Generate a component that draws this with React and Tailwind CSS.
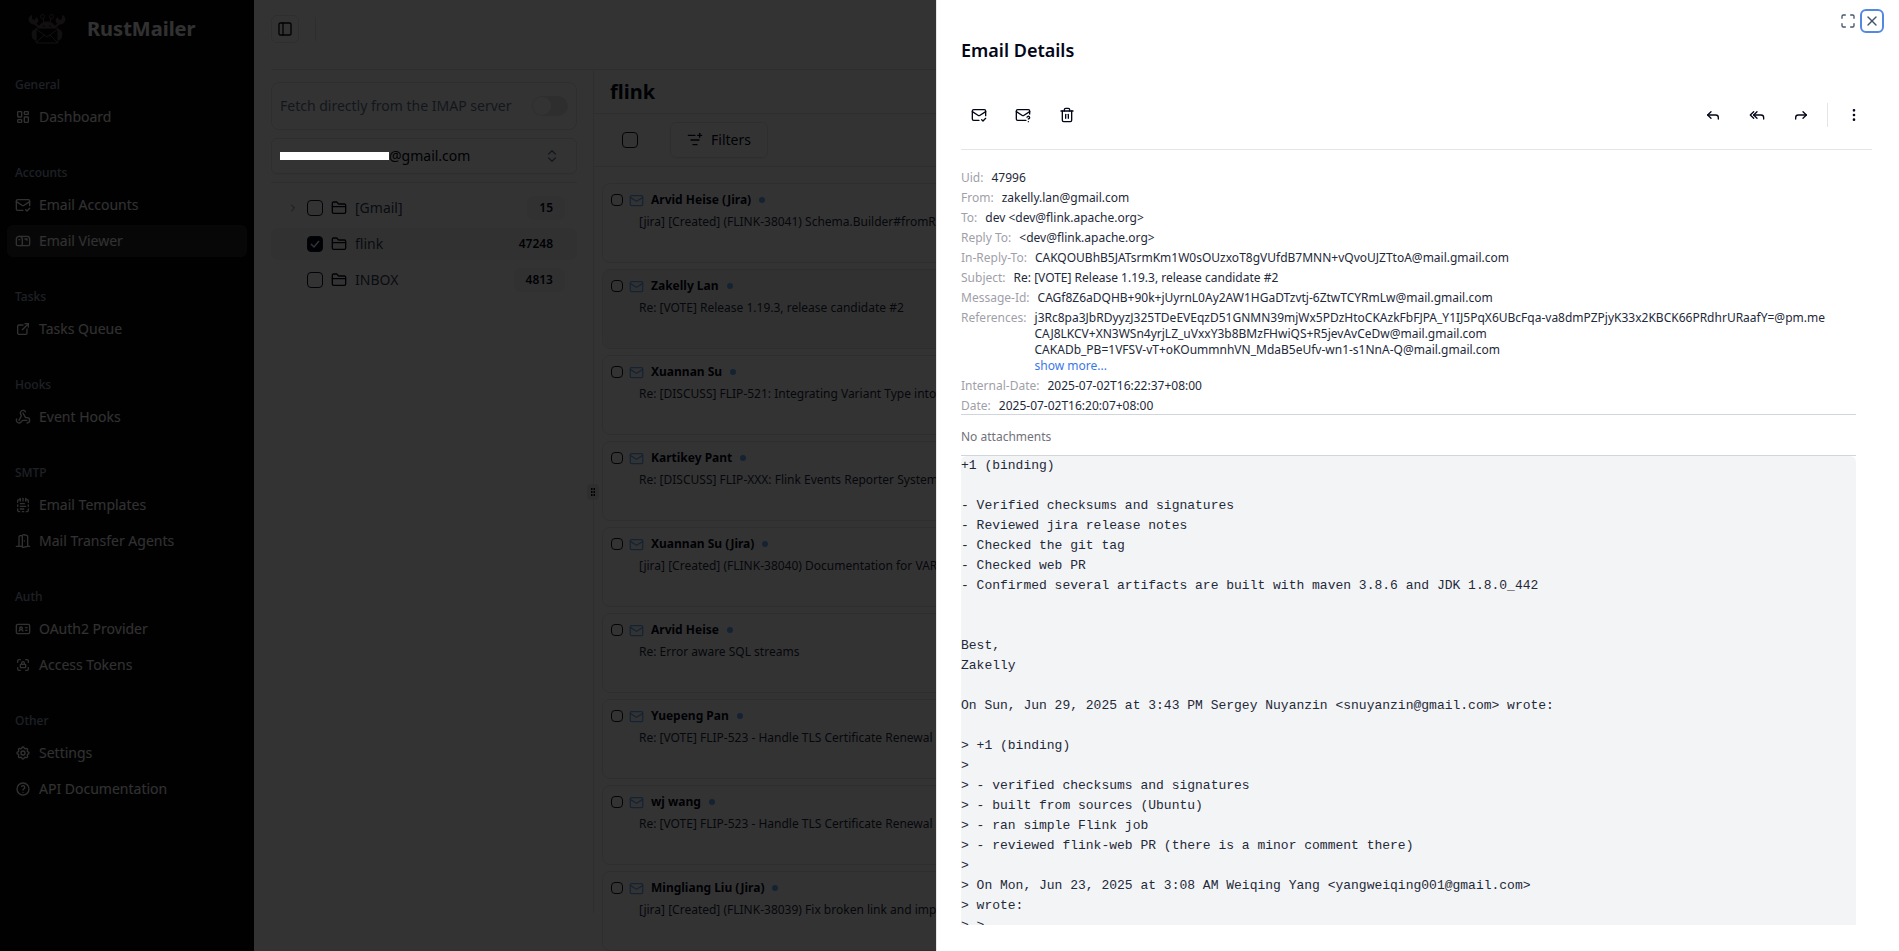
import { useState } from 'react';
import { TbLayoutDashboard, TbExternalLink, TbLockAccess, TbSettings, TbHelp } from 'react-icons/tb';
import {
  ChevronRight,
  ChevronsUpDown,
  DoorOpen,
  EllipsisVertical,
  FolderClosed,
  Forward,
  IdCard,
  ListFilterPlus,
  Mail,
  Mailbox,
  MailCheck,
  MailQuestion,
  Maximize,
  NotepadTextDashed,
  PanelLeft,
  Reply,
  ReplyAll,
  Trash2,
  Webhook,
  X,
} from 'lucide-react';
import clsx from 'clsx';

const navGroups = [
  { title: 'General', items: [{ label: 'Dashboard', icon: TbLayoutDashboard }] },
  {
    title: 'Accounts',
    items: [
      { label: 'Email Accounts', icon: MailCheck },
      { label: 'Email Viewer', icon: Mailbox, active: true },
    ],
  },
  { title: 'Tasks', items: [{ label: 'Tasks Queue', icon: TbExternalLink }] },
  { title: 'Hooks', items: [{ label: 'Event Hooks', icon: Webhook }] },
  {
    title: 'SMTP',
    items: [
      { label: 'Email Templates', icon: NotepadTextDashed },
      { label: 'Mail Transfer Agents', icon: DoorOpen },
    ],
  },
  {
    title: 'Auth',
    items: [
      { label: 'OAuth2 Provider', icon: IdCard },
      { label: 'Access Tokens', icon: TbLockAccess },
    ],
  },
  {
    title: 'Other',
    items: [
      { label: 'Settings', icon: TbSettings },
      { label: 'API Documentation', icon: TbHelp },
    ],
  },
];

const mailboxes = [
  { name: '[Gmail]', count: 15, expandable: true },
  { name: 'flink', count: 47248 },
  { name: 'INBOX', count: 4813 },
];

const messages = [
  { from: 'Arvid Heise (Jira)', subject: '[jira] [Created] (FLINK-38041) Schema.Builder#fromResolvedSchema drops columns' },
  { from: 'Zakelly Lan', subject: 'Re: [VOTE] Release 1.19.3, release candidate #2', open: true },
  { from: 'Xuannan Su', subject: 'Re: [DISCUSS] FLIP-521: Integrating Variant Type into Flink' },
  { from: 'Kartikey Pant', subject: 'Re: [DISCUSS] FLIP-XXX: Flink Events Reporter System' },
  { from: 'Xuannan Su (Jira)', subject: '[jira] [Created] (FLINK-38040) Documentation for VARIANT type' },
  { from: 'Arvid Heise', subject: 'Re: Error aware SQL streams' },
  { from: 'Yuepeng Pan', subject: 'Re: [VOTE] FLIP-523 - Handle TLS Certificate Renewal' },
  { from: 'wj wang', subject: 'Re: [VOTE] FLIP-523 - Handle TLS Certificate Renewal' },
  { from: 'Mingliang Liu (Jira)', subject: '[jira] [Created] (FLINK-38039) Fix broken link and improve docs' },
];

const headers = [
  ['Uid', '47996'],
  ['From', 'zakelly.lan@gmail.com'],
  ['To', 'dev <dev@flink.apache.org>'],
  ['Reply To', '<dev@flink.apache.org>'],
  ['In-Reply-To', 'CAKQOUBhB5JATsrmKm1W0sOUzxoT8gVUfdB7MNN+vQvoUJZTtoA@mail.gmail.com'],
  ['Subject', 'Re: [VOTE] Release 1.19.3, release candidate #2'],
  ['Message-Id', 'CAGf8Z6aDQHB+90k+jUyrnL0Ay2AW1HGaDTzvtj-6ZtwTCYRmLw@mail.gmail.com'],
  [
    'References',
    [
      'j3Rc8pa3JbRDyyzJ325TDeEVEqzD51GNMN39mjWx5PDzHtoCKAzkFbFJPA_Y1IJ5PqX6UBcFqa-va8dmPZPjyK33x2KBCK66PRdhrURaafY=@pm.me',
      'CAJ8LKCV+XN3WSn4yrjLZ_uVxxY3b8BMzFHwiQS+R5jevAvCeDw@mail.gmail.com',
      'CAKADb_PB=1VFSV-vT+oKOummnhVN_MdaB5eUfv-wn1-s1NnA-Q@mail.gmail.com',
    ],
  ],
  ['Internal-Date', '2025-07-02T16:22:37+08:00'],
  ['Date', '2025-07-02T16:20:07+08:00'],
];

const body = `+1 (binding)

- Verified checksums and signatures
- Reviewed jira release notes
- Checked the git tag
- Checked web PR
- Confirmed several artifacts are built with maven 3.8.6 and JDK 1.8.0_442


Best,
Zakelly

On Sun, Jun 29, 2025 at 3:43 PM Sergey Nuyanzin <snuyanzin@gmail.com> wrote:

> +1 (binding)
>
> - verified checksums and signatures
> - built from sources (Ubuntu)
> - ran simple Flink job
> - reviewed flink-web PR (there is a minor comment there)
>
> On Mon, Jun 23, 2025 at 3:08 AM Weiqing Yang <yangweiqing001@gmail.com>
> wrote:
> >
`;

const CrabLogo = () => (
  <svg viewBox="0 0 40 32" className="h-8 w-10" fill="none" stroke="#5c4d58" strokeWidth="1" aria-hidden="true">
    <path d="M11 17c1-5 4-8 9-8s8 3 9 8z" fill="#5c4d58" />
    <path d="M16 13h2M22 13h2" stroke="#09090b" />
    <circle cx="15.500" cy="3.500" r="2" />
    <circle cx="24.500" cy="3.500" r="2" />
    <path d="M16 5.500l1 4M24 5.500l-1 4" />
    <path d="M5 2C2 3 1 6 2 8c1 3 4 4 7 3 2-1 3-3 2-5L9 4l-1 3-3-1zM35 2c3 1 4 4 3 6-1 3-4 4-7 3-2-1-3-3-2-5l2-2 1 3 3-1z" fill="#5c4d58" stroke="none" />
    <path d="M7 10l5 4M33 10l-5 4" strokeWidth="2" />
    <path d="M9 16c-4 1-5 4-4 7 0 2 1 4 4 4zM31 16c4 1 5 4 4 7 0 2-1 4-4 4z" fill="#5c4d58" stroke="none" />
    <rect x="9" y="15" width="22" height="15" rx="1" fill="#09090b" />
    <path d="M9 16l11 8 11-8M9 30l8-8M31 30l-8-8" />
  </svg>
);

const Checkbox = ({ small, ...props }) => (
  <span className={clsx('relative flex shrink-0', small ? 'size-3' : 'size-4')}>
    <input
      type="checkbox"
      className="peer size-full appearance-none rounded-sm border border-slate-900 checked:bg-slate-950"
      {...props}
    />
    <svg viewBox="0 0 16 16" className="pointer-events-none absolute inset-0 hidden peer-checked:block" fill="none" stroke="white" strokeWidth="1.500">
      <path d="M4 8l3 3 5-6" />
    </svg>
  </span>
);

const IconButton = ({ label, icon: Icon }) => (
  <button type="button" aria-label={label} className="flex size-9 items-center justify-center rounded-md hover:bg-slate-100">
    <Icon size={16} />
  </button>
);

const Sidebar = () => (
  <aside className="flex w-[254px] shrink-0 flex-col bg-[#09090b] text-zinc-100">
    <div className="flex h-[57px] items-center gap-5 pl-[27px]">
      <CrabLogo />
      <span className="text-xl font-bold">RustMailer</span>
    </div>
    <nav className="flex flex-col gap-6 px-[7px] pt-3">
      {navGroups.map((group) => (
        <div key={group.title}>
          <h2 className="flex h-8 items-center px-2 text-xs font-medium text-slate-400">{group.title}</h2>
          <ul className="flex flex-col gap-1">
            {group.items.map(({ label, icon: Icon, active }) => (
              <li key={label}>
                <a href="#" className={clsx('flex h-8 items-center gap-2 rounded-md px-2 text-sm', active && 'bg-zinc-800')}>
                  <Icon size={16} className="shrink-0" />
                  {label}
                </a>
              </li>
            ))}
          </ul>
        </div>
      ))}
    </nav>
  </aside>
);

const MailboxPanel = () => (
  <section className="flex w-[322px] shrink-0 flex-col pt-3 pr-4">
    <label className="flex h-12 items-center justify-between rounded-lg border border-neutral-200 px-2 text-sm text-slate-500">
      Fetch directly from the IMAP server
      <span className="relative flex h-5 w-9">
        <input type="checkbox" role="switch" className="peer size-full appearance-none rounded-full bg-neutral-200" />
        <span className="pointer-events-none absolute top-px left-px size-[18px] rounded-full bg-white" />
      </span>
    </label>
    <button type="button" className="mt-2 flex h-9 items-center rounded-md border border-neutral-200 px-2 text-sm shadow-xs">
      <span className="relative z-20 h-2 w-[109px] bg-white" />
      @gmail.com
      <ChevronsUpDown size={16} className="mr-2 ml-auto text-slate-500" />
    </button>
    <hr className="mt-2 border-neutral-200" />
    <ul className="flex flex-col gap-1 pt-[9px]">
      {mailboxes.map((box) => (
        <li key={box.name} className={clsx('flex h-8 items-center gap-2 rounded-md pr-3 pl-4', box.name === 'flink' && 'bg-neutral-100')}>
          {box.expandable ? <ChevronRight size={12} className="text-slate-500" /> : <span className="w-3" />}
          <label className="flex flex-1 items-center gap-2 text-sm text-slate-700">
            <Checkbox defaultChecked={box.name === 'flink'} />
            <FolderClosed size={16} className="text-slate-950" />
            {box.name}
          </label>
          <span className="rounded-md bg-neutral-100 px-3 py-1 text-xs font-semibold">{box.count}</span>
        </li>
      ))}
    </ul>
  </section>
);

const MessageList = () => (
  <section className="flex min-w-0 flex-1 flex-col">
    <h1 className="flex h-11 items-center px-4 text-xl font-bold">flink</h1>
    <div className="flex h-[55px] items-center gap-8 border-y border-neutral-200 px-7">
      <Checkbox aria-label="Select all" />
      <button type="button" className="flex h-9 items-center gap-2 rounded-md border border-neutral-200 px-4 text-sm shadow-xs">
        <ListFilterPlus size={16} />
        Filters
      </button>
    </div>
    <ul className="flex flex-col gap-1.5 px-2 pt-4">
      {messages.map((msg) => (
        <li key={msg.from} className={clsx('h-20 shrink-0 rounded-lg border border-neutral-200 px-2 py-1.5', msg.open && 'bg-neutral-100')}>
          <label className="flex h-5 items-center text-xs font-bold">
            <Checkbox small />
            <Mail size={15} className="mr-[7px] ml-1.5 text-[#66aaf8]" />
            {msg.from}
            <span className="ml-2 size-1.5 rounded-full bg-[#66aaf8]" />
          </label>
          <p className="truncate pt-1 pl-7 text-xs text-slate-800">{msg.subject}</p>
        </li>
      ))}
    </ul>
  </section>
);

const EmailDrawer = () => {
  const [expanded, setExpanded] = useState(false);

  return (
    <div
      role="dialog"
      aria-label="Email Details"
      className="fixed inset-y-0 right-0 z-30 flex w-[963px] max-w-full flex-col border-l border-neutral-200 bg-white pr-[27px] pb-[26px] pl-6"
    >
      <div className="absolute top-[9px] right-[15px] flex items-center gap-0.5 text-slate-600">
        <button type="button" aria-label="Fullscreen" className="flex size-5 items-center justify-center">
          <Maximize size={16} />
        </button>
        <button type="button" aria-label="Close" className="flex size-6 items-center justify-center rounded-md border-2 border-[#5588e0]">
          <X size={16} />
        </button>
      </div>
      <h2 className="mt-9 text-lg font-semibold">Email Details</h2>
      <div className="mt-[33px] flex items-center gap-2 border-b border-neutral-200 pb-4">
        <IconButton label="Mark as read" icon={MailCheck} />
        <IconButton label="Mark as unread" icon={MailQuestion} />
        <IconButton label="Delete" icon={Trash2} />
        <div className="ml-auto" />
        <IconButton label="Reply" icon={Reply} />
        <IconButton label="Reply all" icon={ReplyAll} />
        <IconButton label="Forward" icon={Forward} />
        <div className="h-6 w-px bg-neutral-200" />
        <IconButton label="More" icon={EllipsisVertical} />
      </div>
      <div className="mr-4 flex min-h-0 flex-1 flex-col pt-5 text-xs">
        <dl className="flex flex-col gap-1 border-b border-gray-300">
          {headers.map(([name, value]) => (
            <div key={name} className="flex gap-2">
              <dt className="shrink-0 text-zinc-400">{name}:</dt>
              {Array.isArray(value) ? (
                <dd className="text-gray-800">
                  {value.map((ref) => (
                    <div key={ref}>{ref}</div>
                  ))}
                  <button type="button" className="block text-[#3b78e7]" onClick={() => setExpanded(!expanded)}>
                    {expanded ? 'show less' : 'show more...'}
                  </button>
                </dd>
              ) : (
                <dd className="text-gray-800">{value}</dd>
              )}
            </div>
          ))}
        </dl>
        <p className="border-b border-gray-300 pt-3.5 pb-2.5 text-zinc-500">No attachments</p>
        <pre className="min-h-0 flex-1 overflow-hidden rounded-t-md bg-gray-100 font-['Liberation_Mono',monospace] text-[13px] leading-5 text-gray-800">
          {body}
        </pre>
      </div>
    </div>
  );
};

const App = () => (
  <div className="flex h-screen overflow-hidden bg-white font-['Noto_Sans',sans-serif] text-slate-950">
    <Sidebar />
    <main className="flex min-w-0 flex-1 flex-col pl-[17px]">
      <header className="flex h-[70px] shrink-0 items-start gap-4 border-b border-neutral-200 pt-[15px]">
        <button type="button" aria-label="Toggle sidebar" className="flex size-7 items-center justify-center rounded-md border border-neutral-200">
          <PanelLeft size={16} />
        </button>
        <div className="mt-0.5 h-6 w-px bg-neutral-200" />
      </header>
      <div className="flex min-h-0 flex-1">
        <MailboxPanel />
        <div className="relative mb-[38px] w-px shrink-0 bg-neutral-200">
          <div className="absolute top-1/2 -left-1.5 flex h-4 w-3 -translate-y-1/2 items-center justify-center rounded-sm bg-neutral-200">
            <svg viewBox="0 0 4 8" className="h-2 w-1" fill="#020617">
              <path d="M0 0h1.500v2H0zM2.500 0H4v2H2.500zM0 3h1.500v2H0zM2.500 3H4v2H2.500zM0 6h1.500v2H0zM2.500 6H4v2H2.500z" />
            </svg>
          </div>
        </div>
        <MessageList />
      </div>
    </main>
    <div className="fixed inset-0 z-10 bg-black/80" />
    <EmailDrawer />
  </div>
);

export default App;
